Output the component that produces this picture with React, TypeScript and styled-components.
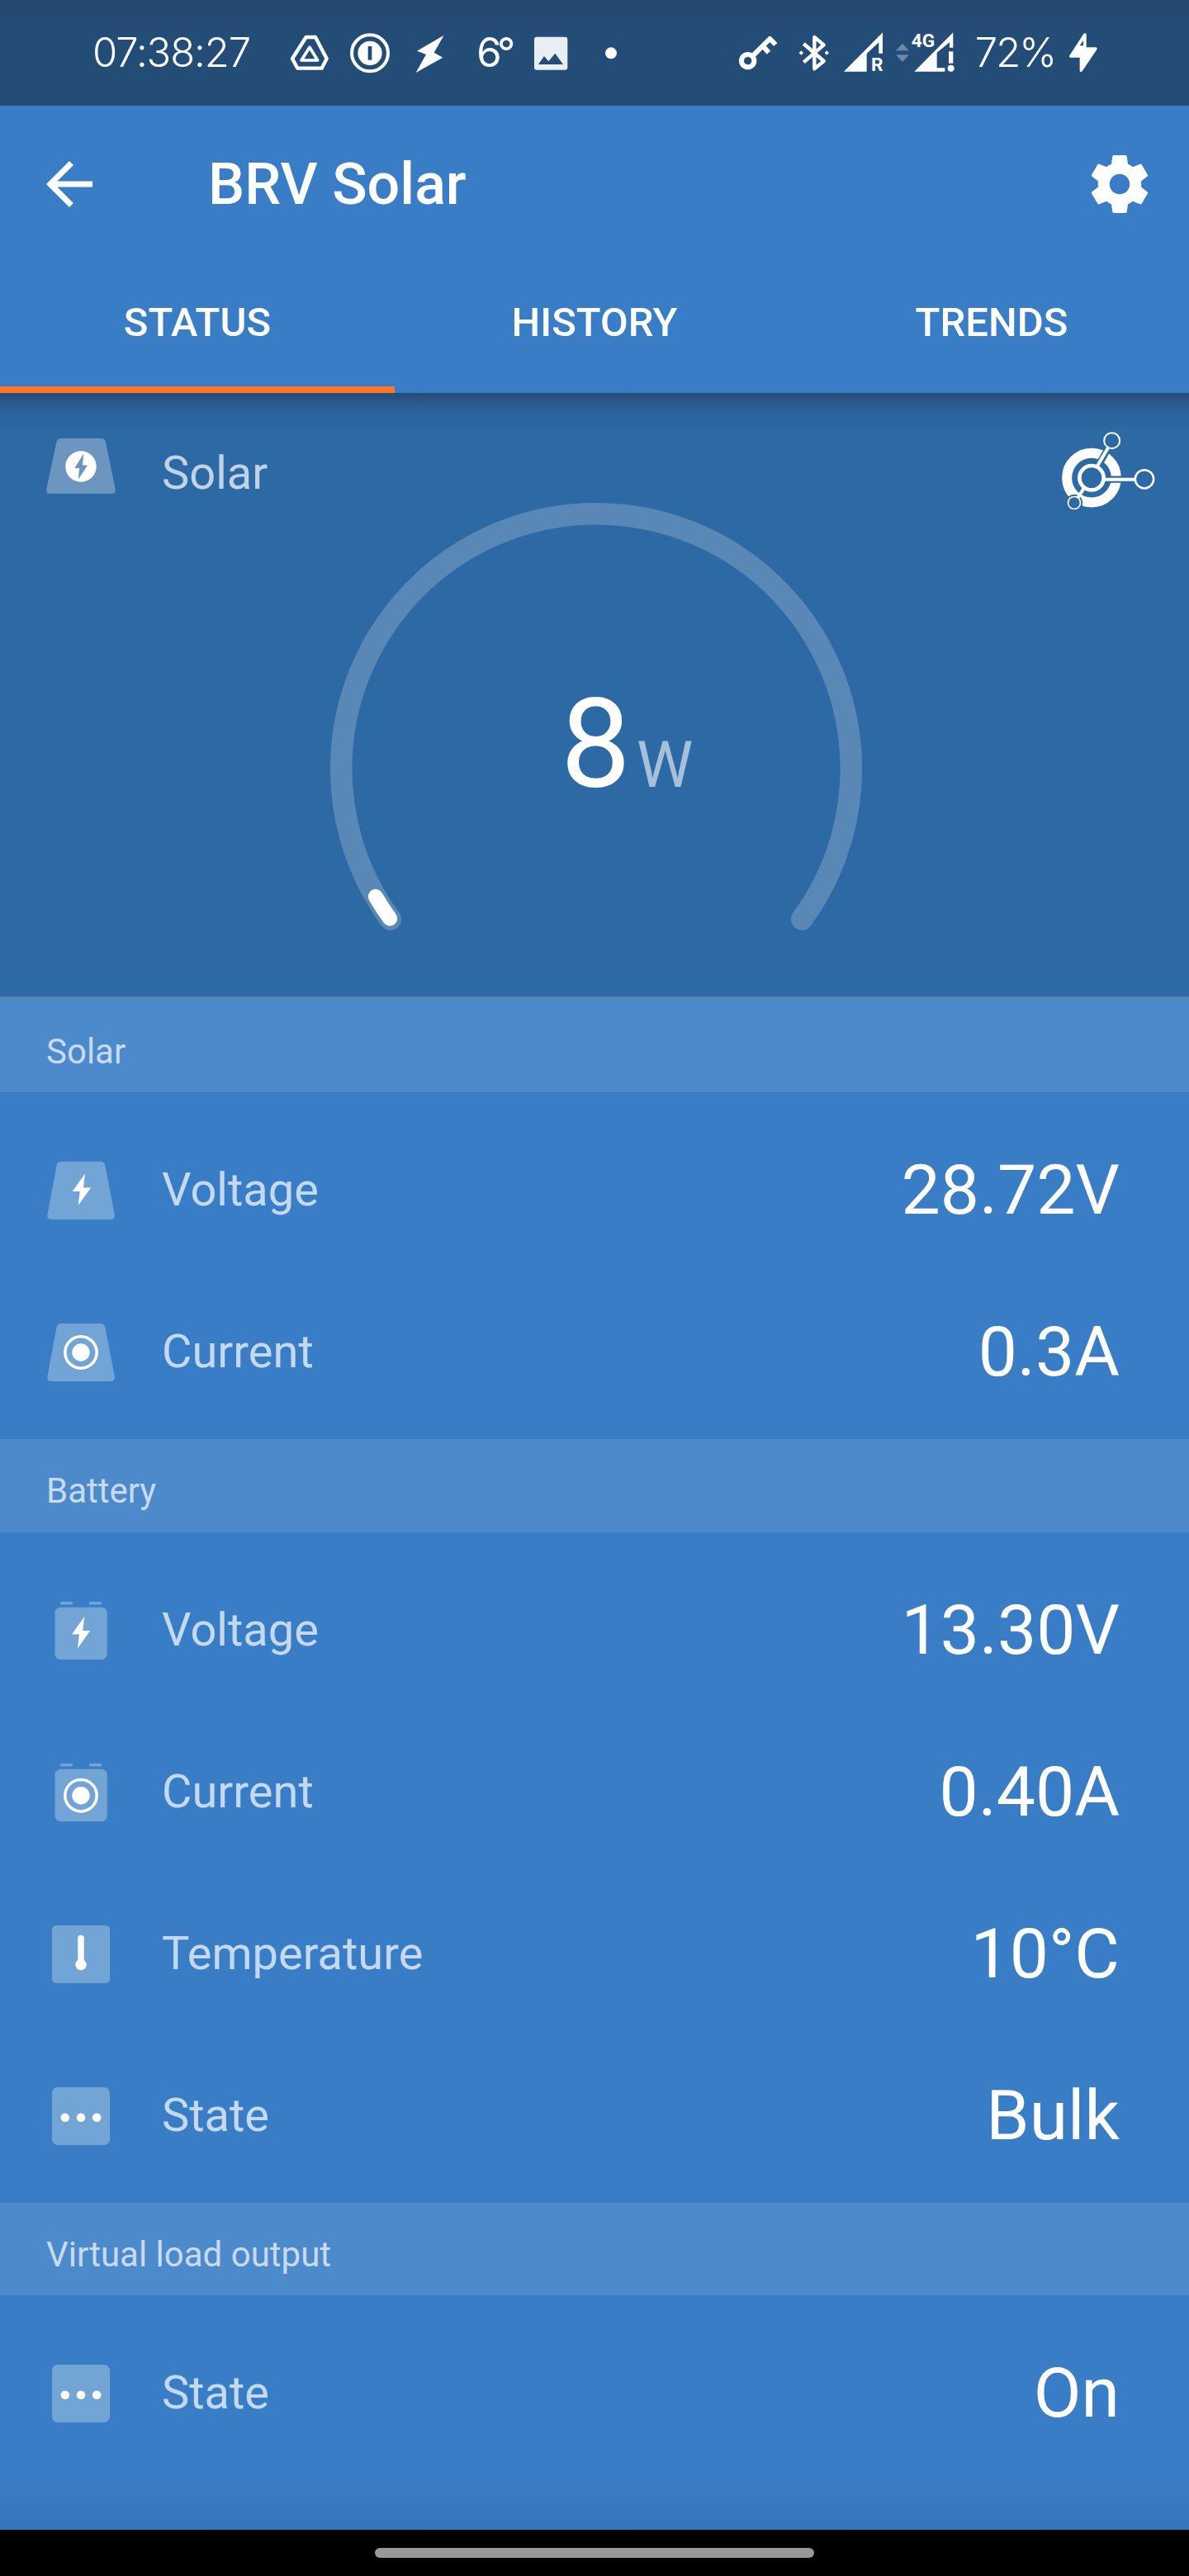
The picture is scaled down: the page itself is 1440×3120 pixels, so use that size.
import React from "react";
import styled, { createGlobalStyle } from "styled-components";

const color = {
  status: "#234d77",
  primary: "#397dc6",
  hero: "#2d69a4",
  accent: "#ff7629",
  section: "#4d8acb",
};

const GlobalStyle = createGlobalStyle`
  * { box-sizing: border-box; }
  html, body { margin: 0; padding: 0; }
  body { background: #000; font-family: Roboto, "Liberation Sans", sans-serif; color: #fff; }
  svg { display: block; flex: none; }
`;

const Screen = styled.div`
  width: 1440px;
  height: 3120px;
  display: flex;
  flex-direction: column;
  background: ${color.primary};
  overflow: hidden;
`;

/* ---------- Android status bar ---------- */

const StatusBar = styled.header`
  height: 128px;
  flex: none;
  display: flex;
  align-items: center;
  justify-content: space-between;
  padding: 0 111px 0 112px;
  background: linear-gradient(#25466f 0, ${color.status} 46px);
`;

const StatusGroup = styled.div`
  display: flex;
  align-items: center;
`;

const StatusText = styled.span<{ $width: number; $gap?: number; $spacing?: number; $weight?: number }>`
  width: ${(p) => p.$width}px;
  margin-left: ${(p) => p.$gap ?? 0}px;
  font-family: Inter, "Liberation Sans", sans-serif;
  font-weight: ${(p) => p.$weight ?? 300};
  font-size: 49px;
  line-height: 60px;
  letter-spacing: ${(p) => p.$spacing ?? 0}px;
  white-space: nowrap;
`;

const StatusSvg = styled.svg<{ $gap: number }>`
  height: 66.67px;
  margin-left: ${(p) => p.$gap}px;
  fill: #fff;
  overflow: visible;
`;

/* Status glyphs are drawn on a grid of three units per pixel, 200 units tall. */
function StatusGlyph({ x, w, gap, children }: { x: number; w: number; gap: number; children: React.ReactNode }) {
  return (
    <StatusSvg $gap={gap} width={w / 3} viewBox={`${x} 32 ${w} 200`}>
      {children}
    </StatusSvg>
  );
}

const GlyphText = styled.text`
  font: 700 68px Roboto, sans-serif;
`;

/* ---------- App bar ---------- */

const AppBar = styled.div`
  height: 190px;
  flex: none;
  display: flex;
  align-items: center;
  padding: 0 42px;
`;

const Title = styled.h1`
  flex: 1;
  margin: 0 0 0 126px;
  font-size: 70px;
  font-weight: 500;
  line-height: 82px;
`;

const Tabs = styled.nav`
  height: 158px;
  flex: none;
  display: grid;
  grid-template-columns: 478px 484px 478px;
`;

const Tab = styled.div<{ $active?: boolean }>`
  display: flex;
  align-items: center;
  justify-content: center;
  padding-bottom: 6px;
  border-bottom: 8px solid ${(p) => (p.$active ? color.accent : "transparent")};
  font-size: 49px;
  font-weight: 500;
`;

/* ---------- Hero ---------- */

const Hero = styled.section`
  height: 731px;
  flex: none;
  display: grid;
  grid-template: 100% / 100%;
  background: linear-gradient(#254a73 0, #28568a 10px, #2b639c 24px, ${color.hero} 46px);
`;

const HeroHeader = styled.div`
  grid-area: 1 / 1;
  display: flex;
  align-items: flex-start;
  padding: 44px 41px 0 56px;
`;

const HeroIcon = styled.svg`
  margin-top: 10.5px;
`;

const HeroLabel = styled.span`
  flex: 1;
  padding: 20px 0 0 56px;
  font-size: 56px;
  line-height: 66px;
  color: rgba(255, 255, 255, 0.7);
`;

const Dial = styled.svg`
  grid-area: 1 / 1;
  margin: 123px 0 0 391.7px;
`;

const Reading = styled.div`
  grid-area: 1 / 1;
  display: flex;
  align-items: baseline;
  padding: 337px 0 0 679px;
  font-size: 151px;
  line-height: 177px;
`;

const Unit = styled.span`
  margin-left: 7px;
  font-size: 77px;
  color: rgba(255, 255, 255, 0.58);
`;

/* ---------- Lists ---------- */

const SectionHeader = styled.h2<{ $height?: number; $first?: boolean }>`
  height: ${(p) => (p.$height ?? 112) + (p.$first ? 4 : 0)}px;
  flex: none;
  margin: 0;
  padding: 38px 56px 0;
  border-top: ${(p) => (p.$first ? "4px solid #5788b9" : "none")};
  background: ${color.section};
  color: rgba(255, 255, 255, 0.7);
  font-size: 42px;
  font-weight: 400;
  line-height: 50px;
`;

const Rows = styled.div`
  flex: none;
  padding: 21px 0 7px;
`;

const Row = styled.div`
  height: 196px;
  display: flex;
  align-items: center;
  padding: 0 84px 0 56px;
`;

const Label = styled.span`
  flex: 1;
  margin-left: 56px;
  padding-bottom: 2px;
  font-size: 56px;
  line-height: 66px;
  color: rgba(255, 255, 255, 0.7);
`;

const Value = styled.span`
  font-size: 84px;
  line-height: 98px;
`;

const BottomFade = styled.div`
  flex: 1;
  background: linear-gradient(${color.primary}, #3475b9);
`;

const NavBar = styled.footer`
  height: 56px;
  flex: none;
  display: flex;
  justify-content: center;
  align-items: center;
  background: #000;
`;

const NavPill = styled.div`
  width: 532px;
  height: 12px;
  border-radius: 6px;
  background: #989898;
`;

/* ---------- Row icons ---------- */

type Shape = "panel" | "battery" | "square";
type Mark = "bolt" | "target" | "thermometer" | "dots";

function RowIcon({ shape, mark }: { shape: Shape; mark: Mark }) {
  const cy = shape === "battery" ? 38.7 : 35;
  return (
    <svg width="84" height="70" viewBox="0 0 84 70" fill="#fff">
      <g fill="#73a4d6">
        {shape === "panel" && (
          <path d="M18 0H66Q70.6 0 71.4 4.5L82.8 64Q83.6 70 78 70H6Q.4 70 1.4 64L12.6 4.5Q13.4 0 18 0Z" />
        )}
        {shape === "battery" && (
          <>
            <rect x="10.5" y="6.8" width="63.3" height="63.2" rx="6.5" />
            <rect x="17" y="0" width="15" height="3.5" rx="1" />
            <rect x="52" y="0" width="15" height="3.5" rx="1" />
          </>
        )}
        {shape === "square" && <rect x="7" y="0" width="70" height="70" rx={mark === "dots" ? 7 : 5} />}
      </g>
      {mark === "bolt" && (
        <path
          transform={shape === "battery" ? "translate(-0.7 3.4)" : undefined}
          d="M47 14.4L31.7 36.1H40.7L38.7 53L54 31.5H45Z"
        />
      )}
      {mark === "target" && (
        <>
          <circle cx="42" cy={cy} r="19.2" fill="none" stroke="#fff" strokeWidth="3.5" />
          <circle cx="42" cy={cy} r="10.7" />
        </>
      )}
      {mark === "thermometer" && (
        <>
          <rect x="38.3" y="11.8" width="7.5" height="36" rx="3.7" />
          <circle cx="42" cy="47.6" r="6.7" />
        </>
      )}
      {mark === "dots" && [22.8, 42, 61.2].map((x) => <circle key={x} cx={x} cy="36.7" r="5.3" />)}
    </svg>
  );
}

function NetworkIcon() {
  return (
    <svg width="116" height="100" viewBox="128 1110 348 300" fill="none" stroke="#fff">
      <circle cx="245" cy="1286" r="89.5" strokeWidth="36" />
      <g stroke={color.hero} strokeWidth="25">
        <path d="M245 1286L312 1166" />
        <path d="M245 1292H356" />
      </g>
      <circle cx="182" cy="1377" r="31" fill={color.hero} stroke="none" />
      <g strokeWidth="12">
        <path d="M265 1245L305 1177" />
        <path d="M292 1292H402" />
        <path d="M216 1326L194 1360" />
      </g>
      <circle cx="245" cy="1286" r="44" strokeWidth="14" fill={color.hero} />
      <circle cx="319" cy="1151" r="28.5" strokeWidth="6" fill={color.hero} />
      <circle cx="437" cy="1291" r="33.5" strokeWidth="7.5" fill={color.hero} />
      <circle cx="182" cy="1377" r="22.5" strokeWidth="5" fill={color.hero} />
    </svg>
  );
}

/* ---------- Dial ---------- */

const RADIUS = 308.8;
const CENTER = { x: 330, y: 332 };

function point(deg: number) {
  const a = (deg * Math.PI) / 180;
  return `${(CENTER.x - RADIUS * Math.cos(a)).toFixed(2)} ${(CENTER.y + RADIUS * Math.sin(a)).toFixed(2)}`;
}

function PowerDial() {
  return (
    <Dial width="660" height="560" viewBox="0 0 660 560" fill="none" strokeLinecap="round">
      <path
        d={`M${point(36.2)}A${RADIUS} ${RADIUS} 0 1 1 ${point(143.8)}`}
        stroke="#fff"
        strokeOpacity="0.21"
        strokeWidth="26.5"
      />
      <path d={`M${point(36)}A${RADIUS} ${RADIUS} 0 0 1 ${point(30.1)}`} stroke="#fff" strokeWidth="18" />
    </Dial>
  );
}

/* ---------- Data ---------- */

type Item = { shape: Shape; mark: Mark; label: string; value: string };

const sections: { title: string; height?: number; items: Item[] }[] = [
  {
    title: "Solar",
    items: [
      { shape: "panel", mark: "bolt", label: "Voltage", value: "28.72V" },
      { shape: "panel", mark: "target", label: "Current", value: "0.3A" },
    ],
  },
  {
    title: "Battery",
    height: 113,
    items: [
      { shape: "battery", mark: "bolt", label: "Voltage", value: "13.30V" },
      { shape: "battery", mark: "target", label: "Current", value: "0.40A" },
      { shape: "square", mark: "thermometer", label: "Temperature", value: "10°C" },
      { shape: "square", mark: "dots", label: "State", value: "Bulk" },
    ],
  },
  {
    title: "Virtual load output",
    items: [{ shape: "square", mark: "dots", label: "State", value: "On" }],
  },
];

export default function App() {
  return (
    <Screen>
      <GlobalStyle />
      <StatusBar>
        <StatusGroup>
          <StatusText $width={193} $spacing={-1.1}>07:38:27</StatusText>
          <StatusGlyph x={787} w={138} gap={47.3}>
            <g fill="none" stroke="#fff" strokeLinejoin="round">
              <path d="M843 74H877L918 152L900 187H812L793 152Z" strokeWidth="13" />
              <path d="M856 111L885 158H826Z" strokeWidth="11" />
            </g>
          </StatusGlyph>
          <StatusGlyph x={-17} w={144} gap={26}>
            <circle cx="55" cy="132" r="66" fill="none" stroke="#fff" strokeWidth="12" />
            <circle cx="55" cy="132" r="44" />
            <rect x="48" y="107" width="14" height="50" fill={color.status} />
          </StatusGlyph>
          <StatusGlyph x={222} w={100} gap={31.6}>
            <path d="M323 67L225 124L258 137L221 203L319 148L287 130Z" />
          </StatusGlyph>
          <StatusText $width={46} $gap={40} $spacing={-5.5} $weight={400}>6°</StatusText>
          <StatusGlyph x={652} w={121} gap={24}>
            <rect x="652" y="73" width="121" height="120" rx="9" fill="#e9edf4" />
            <path d="M667 173L688 143L704 162L728 133L757 173Z" fill={color.status} />
          </StatusGlyph>
          <StatusGlyph x={909} w={42} gap={45.4}>
            <circle cx="930" cy="132" r="21" />
          </StatusGlyph>
        </StatusGroup>
        <StatusGroup>
          <StatusGlyph x={79} w={140} gap={0}>
            <g fill="none" stroke="#fff" strokeWidth="18">
              <circle cx="111" cy="160" r="23" />
              <path d="M127 144L191 80L212 101M166 106L187 130" strokeLinejoin="round" />
            </g>
          </StatusGlyph>
          <StatusGlyph x={297} w={108} gap={26}>
            <path
              d="M313 98L386 161L352 189V74L386 102L313 165"
              fill="none"
              stroke="#fff"
              strokeWidth="13"
              strokeLinejoin="round"
            />
            <path d="M304 123l8 8l-8 8l-8 -8ZM397 123l8 8l-8 8l-8 -8Z" />
          </StatusGlyph>
          <StatusGlyph x={460} w={143} gap={18.3}>
            <path d="M460 199L601 57V133H587V93L543 134V199Z" />
            <GlyphText x="559" y="198">R</GlyphText>
          </StatusGlyph>
          <StatusGlyph x={648} w={48} gap={15}>
            <path d="M672 97L696 123H648ZM648 138H696L672 164Z" fill="#6d88a6" />
          </StatusGlyph>
          <StatusGlyph x={705} w={155} gap={3}>
            <GlyphText x="704" y="110">4G</GlyphText>
            <path d="M715 199L856 57V112H843V93L797 130V186H826V199Z" />
            <rect x="840" y="126" width="16" height="43" />
            <circle cx="848" cy="187" r="12" />
          </StatusGlyph>
          <StatusText $width={104} $gap={25} $spacing={-2}>72%</StatusText>
          <StatusGlyph x={1276} w={101} gap={10.6}>
            <path
              fillRule="evenodd"
              d="M1328 62Q1333 57 1338 62V111H1374Q1379 113 1376 119L1323 198Q1319 203 1314 198V148H1279Q1274 146 1278 139ZM1327 86L1314 105H1327Z"
            />
          </StatusGlyph>
        </StatusGroup>
      </StatusBar>

      <AppBar>
        <svg width="84" height="84" viewBox="0 0 24 24" fill="#fff">
          <path d="M20 11H7.83l5.59-5.59L12 4l-8 8 8 8 1.41-1.41L7.83 13H20v-2z" />
        </svg>
        <Title>BRV Solar</Title>
        <svg width="84" height="84" viewBox="0 0 24 24" fill="#fff">
          <path d="M19.43 12.98c.04-.32.07-.64.07-.98s-.03-.66-.07-.98l2.11-1.65c.19-.15.24-.42.12-.64l-2-3.46c-.12-.22-.39-.3-.61-.22l-2.49 1c-.52-.4-1.08-.73-1.69-.98l-.38-2.65C14.46 2.18 14.25 2 14 2h-4c-.25 0-.46.18-.49.42l-.38 2.65c-.61.25-1.17.59-1.69.98l-2.49-1c-.23-.09-.49 0-.61.22l-2 3.46c-.13.22-.07.49.12.64l2.11 1.65c-.04.32-.07.65-.07.98s.03.66.07.98l-2.11 1.65c-.19.15-.24.42-.12.64l2 3.46c.12.22.39.3.61.22l2.49-1c.52.4 1.08.73 1.69.98l.38 2.65c.03.24.24.42.49.42h4c.25 0 .46-.18.49-.42l.38-2.65c.61-.25 1.17-.59 1.69-.98l2.49 1c.23.09.49 0 .61-.22l2-3.46c.12-.22.07-.49-.12-.64l-2.11-1.65zM12 15.5c-1.93 0-3.5-1.57-3.5-3.5s1.57-3.5 3.5-3.5 3.5 1.57 3.5 3.5-1.57 3.5-3.5 3.5z" />
        </svg>
      </AppBar>
      <Tabs>
        <Tab $active>STATUS</Tab>
        <Tab>HISTORY</Tab>
        <Tab>TRENDS</Tab>
      </Tabs>

      <Hero>
        <HeroHeader>
          <HeroIcon width="84" height="67" viewBox="0 0 84 67" fill="#fff">
            <path
              fillOpacity="0.3"
              d="M17.5 0H67Q71 0 72 4.5L83.6 61Q84.6 67 79 67H5Q-.6 67 .4 61L12.4 4.5Q13.4 0 17.5 0Z"
            />
            <circle cx="42" cy="34" r="18.7" />
            <path d="M45.3 18.6L34.3 36H40L39 49.5L50 32.6H44Z" fill="#6c96bf" />
          </HeroIcon>
          <HeroLabel>Solar</HeroLabel>
          <NetworkIcon />
        </HeroHeader>
        <PowerDial />
        <Reading>
          8<Unit>W</Unit>
        </Reading>
      </Hero>

      {sections.map((s, i) => (
        <React.Fragment key={s.title}>
          <SectionHeader $height={s.height} $first={i === 0}>{s.title}</SectionHeader>
          <Rows>
            {s.items.map((r) => (
              <Row key={r.label}>
                <RowIcon shape={r.shape} mark={r.mark} />
                <Label>{r.label}</Label>
                <Value>{r.value}</Value>
              </Row>
            ))}
          </Rows>
        </React.Fragment>
      ))}
      <BottomFade />
      <NavBar>
        <NavPill />
      </NavBar>
    </Screen>
  );
}
